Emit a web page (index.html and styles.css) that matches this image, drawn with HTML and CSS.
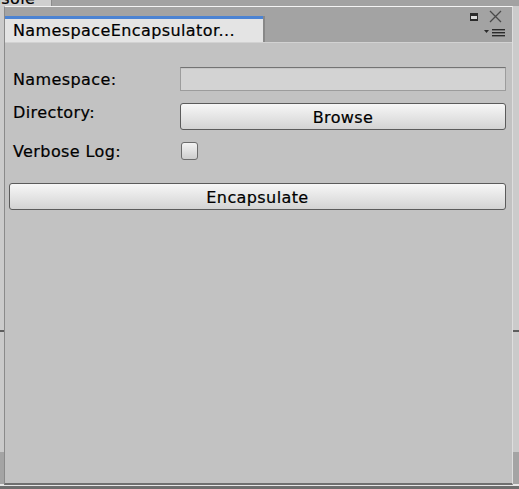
FILE: index.html
```html
<!DOCTYPE html>
<html>
<head>
<meta charset="utf-8">
<link rel="stylesheet" href="styles.css">
</head>
<body>
  <div class="backdrop">
    <div class="bg-top">
      <div class="console-tab"><span class="console-text">Console</span></div>
      <div class="bg-top-rest"></div>
    </div>
    <div class="bg-mid"></div>
    <div class="bg-rule"></div>
    <div class="bg-low"></div>
    <div class="bg-low-dark"></div>
    <div class="bg-bottom-light"></div>
    <div class="bg-bottom-dark"></div>
  </div>

  <div class="window">
    <div class="tabbar">
      <div class="tab">NamespaceEncapsulator...</div>
      <div class="controls">
        <div class="controls-top">
          <svg class="icon-max" width="9" height="9" viewBox="0 0 9 9">
            <rect x="0" y="0" width="8" height="8" fill="#2b2b2b"/>
            <rect x="1" y="3" width="6" height="3" fill="#d9d9d9"/>
          </svg>
          <svg class="icon-close" width="13" height="13" viewBox="0 0 13 13">
            <path d="M1 1 L12 12 M12 1 L1 12" stroke="#4a4a4a" stroke-width="1.3" fill="none"/>
          </svg>
        </div>
        <svg class="icon-menu" width="21" height="8" viewBox="0 0 21 8">
          <path d="M0 1 L5 1 L2.5 4 Z" fill="#2b2b2b"/>
          <rect x="8" y="0" width="13" height="1.4" fill="#2b2b2b"/>
          <rect x="8" y="3" width="13" height="1.4" fill="#2b2b2b"/>
          <rect x="8" y="6" width="13" height="1.4" fill="#2b2b2b"/>
        </svg>
      </div>
    </div>
    <div class="content">
      <div class="row row-ns">
        <div class="label">Namespace:</div>
        <div class="field"></div>
      </div>
      <div class="row row-dir">
        <div class="label">Directory:</div>
        <div class="button">Browse</div>
      </div>
      <div class="row row-verbose">
        <div class="label">Verbose Log:</div>
        <div class="checkbox"></div>
      </div>
      <div class="button wide">Encapsulate</div>
    </div>
  </div>
</body>
</html>
```
FILE: styles.css
```css
html, body {
  margin: 0;
  padding: 0;
}
body {
  width: 519px;
  height: 489px;
  overflow: hidden;
  position: relative;
  font-family: "DejaVu Sans", Verdana, sans-serif;
  font-size: 16px;
  letter-spacing: 0.4px;
  color: #000;
  -webkit-text-stroke: 0.2px #000;
  background: #c9c9c9;
}

/* editor backdrop behind the floating window */
.backdrop {
  display: flex;
  flex-direction: column;
  height: 489px;
}
.bg-top {
  height: 6px;
  display: flex;
  overflow: hidden;
}
.console-tab {
  width: 51px;
  background: #cfcfcf;
  border-right: 1px solid #8c8c8c;
  overflow: hidden;
}
.console-text {
  display: block;
  margin-left: -31px;
  margin-top: -11px;
  line-height: 19px;
  white-space: nowrap;
}
.bg-top-rest {
  flex: 1;
  background: #a2a2a2;
}
.bg-mid {
  height: 324px;
  background: #cbcbcb;
}
.bg-rule {
  height: 2px;
  background: #5e5e5e;
}
.bg-low {
  height: 120px;
  background: #cacaca;
}
.bg-low-dark {
  height: 32px;
  background: #a4a4a4;
}
.bg-bottom-light {
  height: 2px;
  background: #e6e6e6;
}
.bg-bottom-dark {
  flex: 1;
  background: #6e6e6e;
}

/* floating window */
.window {
  position: absolute;
  left: 4px;
  top: 6px;
  width: 507px;
  height: 476px;
  border-top: 1px solid #f4f4f4;
  border-left: 1px solid #8a8a8a;
  border-right: 1px solid #dedede;
  border-bottom: 2px solid #6f6f6f;
  background: #c2c2c2;
  display: flex;
  flex-direction: column;
}
.tabbar {
  height: 35px;
  background: #a3a3a3;
  border-bottom: 1px solid #d2d2d2;
  display: flex;
  justify-content: space-between;
}
.tab {
  margin-top: 9px;
  width: 250px;
  height: 21px;
  padding: 2px 0 0 8px;
  border-top: 3px solid #4b83d3;
  background: #e4e4e4;
  box-shadow: 2px 0 0 #888;
  line-height: 19px;
  white-space: nowrap;
}
.controls {
  display: flex;
  flex-direction: column;
  align-items: flex-end;
  padding: 3px 7px 0 0;
  gap: 6px;
}
.controls-top {
  display: flex;
  align-items: center;
  gap: 10px;
  margin-right: 3px;
}
.icon-max {
  margin-top: 2px;
}

/* inspector content */
.content {
  flex: 1;
  padding: 24px 6px 0 4px;
  display: flex;
  flex-direction: column;
}
.row {
  display: flex;
  align-items: flex-start;
  padding-left: 4px;
}
.label {
  width: 167px;
  flex: none;
  line-height: 19px;
  white-space: nowrap;
}
.row-ns .label {
  margin-top: 3px;
}
.field {
  flex: 1;
  height: 22px;
  border: 1px solid #9c9c9c;
  border-top-color: #737373;
  background: #d3d3d3;
  box-shadow: inset 0 1px 0 #c6c6c6;
}
.row-dir {
  margin-top: 12px;
}
.button {
  flex: 1;
  height: 21px;
  padding: 4px 0 0 0;
  border: 1px solid #5b5b5b;
  border-radius: 3px;
  background: linear-gradient(#f7f7f7, #d3d3d3);
  text-align: center;
  line-height: 19px;
}
.row-verbose {
  margin-top: 12px;
}
.checkbox {
  margin-left: 1px;
  width: 15px;
  height: 16px;
  border: 1px solid #6b6b6b;
  border-radius: 3px;
  background: linear-gradient(#f3f3f3, #cdcdcd);
}
.button.wide {
  flex: none;
  margin-top: 22px;
}
```
